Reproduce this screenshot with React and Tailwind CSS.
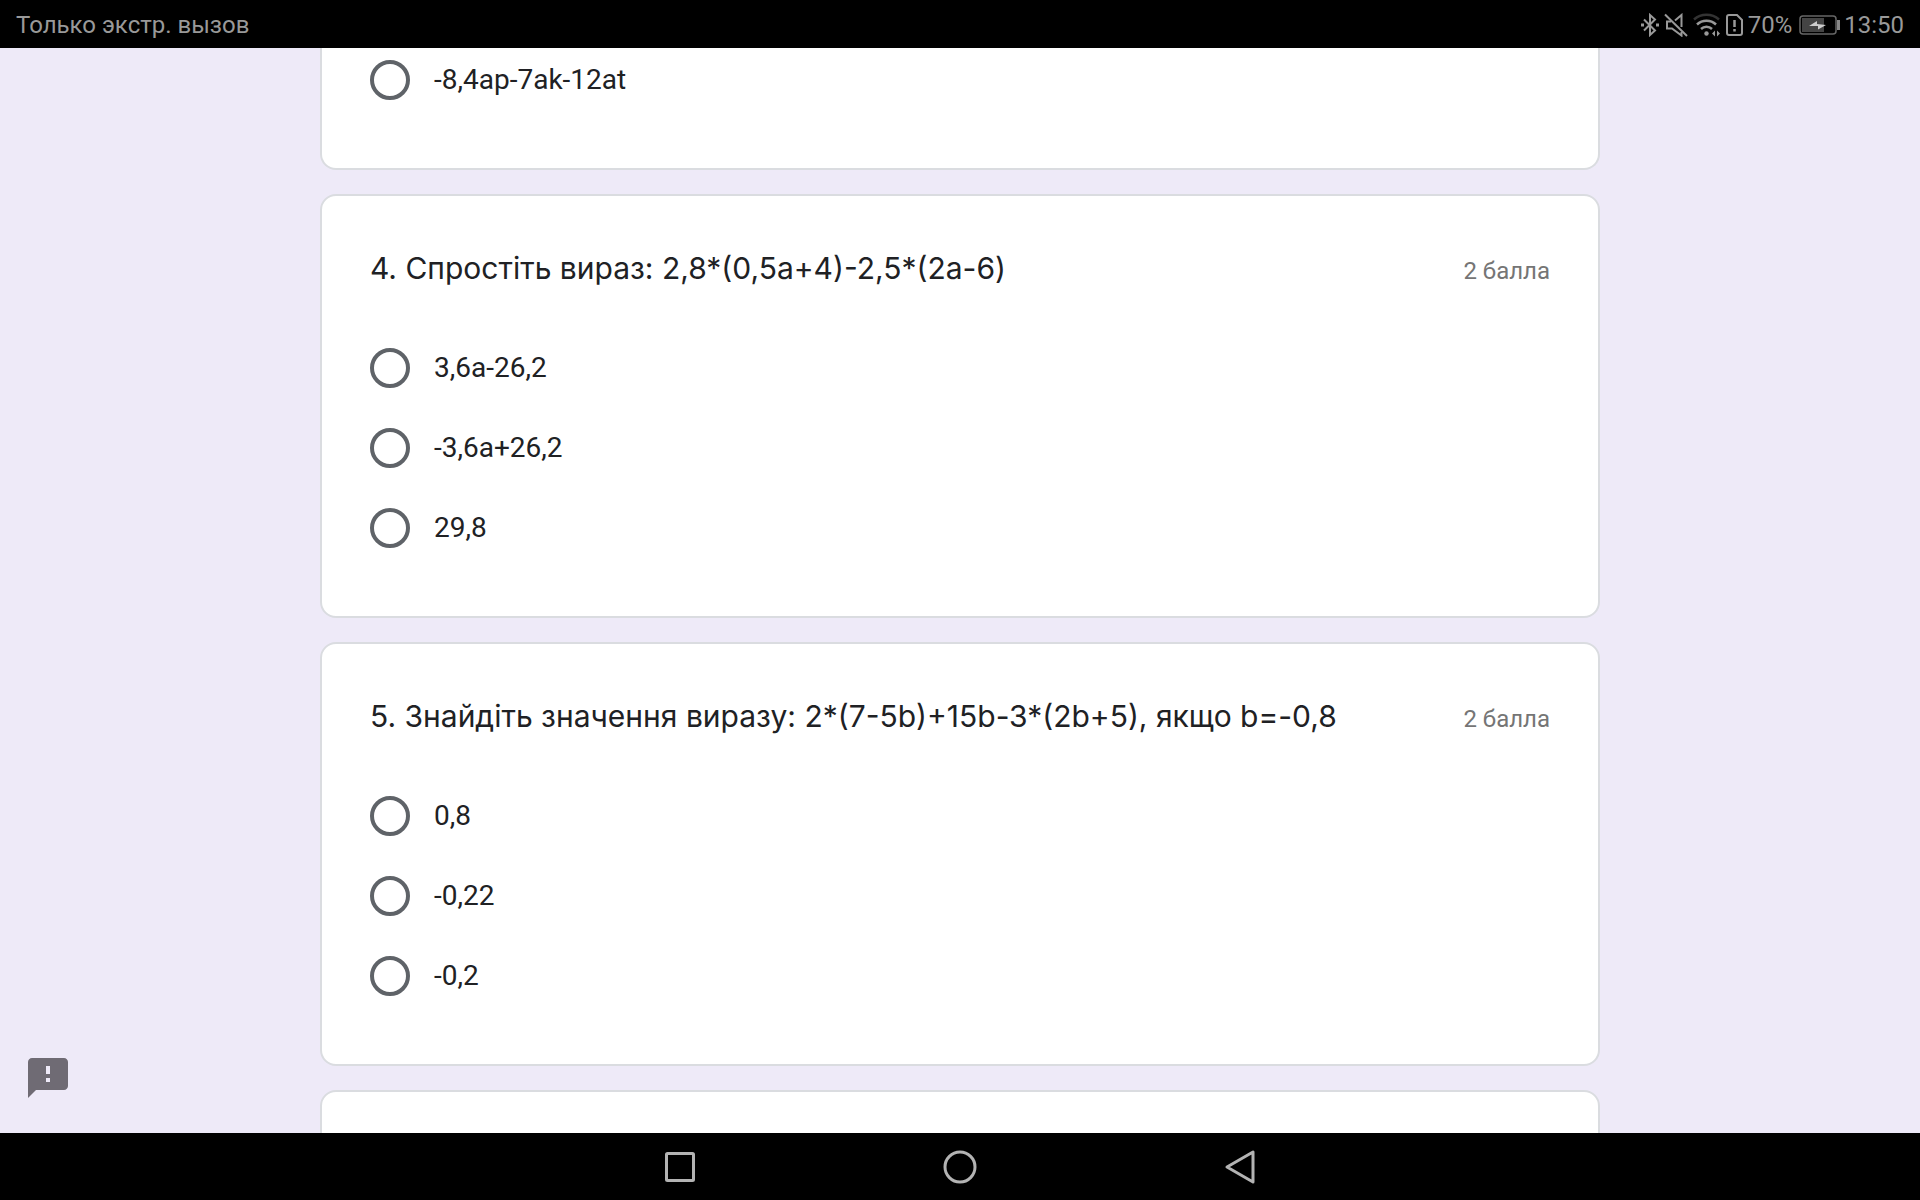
import React, { useState } from "react";

const questions = [
  {
    id: "q4",
    title: "4. Спростіть вираз: 2,8*(0,5a+4)-2,5*(2a-6)",
    points: "2 балла",
    options: ["3,6a-26,2", "-3,6a+26,2", "29,8"],
  },
  {
    id: "q5",
    title: "5. Знайдіть значення виразу: 2*(7-5b)+15b-3*(2b+5), якщо b=-0,8",
    points: "2 балла",
    options: ["0,8", "-0,22", "-0,2"],
  },
];

const StatusIcons = () => (
  <>
    {/* bluetooth */}
    <svg className="h-6 w-5" viewBox="0 0 20 24" fill="none" stroke="#999" strokeWidth="2">
      <path d="M4 6.500l11 11-5 4.500V2l5 4.500-11 11" />
      <path d="M1 12h3M16 12h3" strokeWidth="3" />
    </svg>
    {/* mute */}
    <svg className="ml-1 h-6 w-6" viewBox="0 0 24 24" fill="none" stroke="#999" strokeWidth="2">
      <path d="M1 1.500L23 23" />
      <path d="M7 8.500H3v7h5l9.500 7V19M11 7.500L17.500 2v12" />
    </svg>
    {/* wifi */}
    <svg className="ml-1 h-6 w-7" viewBox="0 0 28 24" fill="none" stroke="#999" strokeWidth="2.500">
      <path d="M2 6.500a19 19 0 0 1 25 0" stroke="#333" />
      <path d="M5 11.500a14 14 0 0 1 19 0M9 16a8 8 0 0 1 11 0" />
      <circle cx="14.500" cy="20.500" r="2.200" fill="#999" stroke="none" />
      <path d="M23 17.500v6l-3-3zM25 17.500v6l3-3z" fill="#999" stroke="none" />
    </svg>
    {/* sim */}
    <svg className="ml-1 h-6 w-5" viewBox="0 0 20 24" fill="none" stroke="#999" strokeWidth="2">
      <path d="M5 2h8l5 5v13a2 2 0 0 1-2 2H5a2 2 0 0 1-2-2V4a2 2 0 0 1 2-2z" />
      <path d="M10.500 7v7M10.500 16v2.500" strokeWidth="2.500" />
    </svg>
  </>
);

const BatteryIcon = () => (
  <svg className="mr-1 ml-1.5 h-6 w-[42px]" viewBox="0 0 42 24">
    <rect x="2" y="3" width="36" height="18" rx="3" fill="none" stroke="#666" strokeWidth="1.500" />
    <rect x="4" y="5" width="22" height="14" fill="#444" />
    <path d="M11 13l8-5v3l9 1-8 4.500V13z" fill="#ccc" />
    <path d="M40.500 7v10" stroke="#888" strokeWidth="3" />
  </svg>
);

const Option = ({ name, label }) => (
  <label className="flex h-20 items-center gap-6">
    <input
      type="radio"
      name={name}
      value={label}
      className="size-10 appearance-none rounded-full border-4 border-[#5f6368] checked:border-[12px] checked:border-[#673ab7]"
    />
    <span className="text-[28px] leading-10">{label}</span>
  </label>
);

const Card = ({ children }) => (
  <section className="rounded-2xl border-2 border-[#dadce0] bg-white px-12 py-12">{children}</section>
);

const Question = ({ id, title, points, options }) => (
  <Card>
    <div className="flex items-baseline justify-between">
      <h2 className="font-['Inter',sans-serif] text-[30px] leading-[48px]">{title}</h2>
      <span className="text-2xl text-[#757575]">{points}</span>
    </div>
    <div className="mt-9">
      {options.map((option) => (
        <Option key={option} name={id} label={option} />
      ))}
    </div>
  </Card>
);

const App = () => {
  const [feedback, setFeedback] = useState(false);

  return (
    <div className="flex h-screen flex-col bg-black font-['Roboto',sans-serif] text-[#202124]">
      <header className="flex h-12 shrink-0 items-center justify-between px-4 pt-0.5 text-2xl text-[#999]">
        <span>Только экстр. вызов</span>
        <div className="flex items-center">
          <StatusIcons />
          <span className="ml-1">70%</span>
          <BatteryIcon />
          <span>13:50</span>
        </div>
      </header>

      <main className="relative flex-1 overflow-hidden bg-[#eeeaf8]">
        <div className="mx-auto flex w-2/3 flex-col gap-6">
          {/* tail of the previous question, scrolled under the status bar */}
          <section className="-mt-2 rounded-b-2xl border-2 border-t-0 border-[#dadce0] bg-white px-12 pb-12">
            <Option name="q3" label="-8,4ap-7ak-12at" />
          </section>
          {questions.map((question) => (
            <Question key={question.id} {...question} />
          ))}
          <Card />
        </div>

        <button
          aria-label="Feedback"
          aria-pressed={feedback}
          onClick={() => setFeedback(!feedback)}
          className="absolute bottom-[31px] left-6"
        >
          <svg className="size-12" viewBox="0 0 24 24" fill="#6f6b74">
            <path d="M20 2H4c-1.100 0-2 .9-2 2v18l4-4h14c1.100 0 2-.9 2-2V4c0-1.100-.9-2-2-2zm-7 12h-2v-2h2v2zm0-4h-2V6h2v4z" />
          </svg>
        </button>
      </main>

      <nav className="flex h-[67px] shrink-0 items-center justify-center">
        <button aria-label="Recent" className="flex w-[280px] justify-center">
          <svg className="size-9" viewBox="0 0 36 36" fill="none" stroke="#b3b3b3" strokeWidth="3">
            <rect x="4.500" y="4.500" width="27" height="27" rx="1" />
          </svg>
        </button>
        <button aria-label="Home" className="flex w-[280px] justify-center">
          <svg className="size-9" viewBox="0 0 36 36" fill="none" stroke="#b3b3b3" strokeWidth="3">
            <circle cx="18" cy="18" r="15" />
          </svg>
        </button>
        <button aria-label="Back" className="flex w-[280px] justify-center">
          <svg className="size-9" viewBox="0 0 36 36" fill="none" stroke="#b3b3b3" strokeWidth="3" strokeLinejoin="round">
            <path d="M31 3v30L5 18z" />
          </svg>
        </button>
      </nav>
    </div>
  );
};

export default App;
